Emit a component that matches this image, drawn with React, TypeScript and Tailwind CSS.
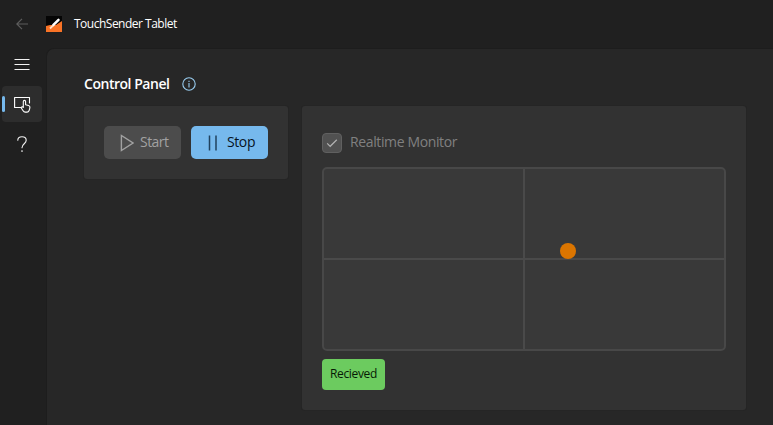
import React from 'react';

function TitleBar() {
  return (
    <header className="flex h-12 shrink-0 items-center pl-4">
      <svg className="h-3 w-3 shrink-0" viewBox="0 0 12 12" fill="none" stroke="#5d5d5d" strokeWidth="1.2">
        <path d="M12 6H.8M6 .8.8 6 6 11.2" />
      </svg>
      <svg className="ml-[18px] h-4 w-4 shrink-0" viewBox="0 0 16 16">
        <path d="M0 0h16v16H0z" fill="#050505" />
        <path d="M0 16v-6l4-1h6l6-4v11z" fill="#f97326" />
        <path d="m7.2 9.2 5.3-5.4" fill="none" stroke="#fff" strokeWidth="2.5" strokeLinecap="round" />
        <path d="m4 12.5 3-3" stroke="#ffe1c8" strokeWidth="1.8" />
      </svg>
      <span className="ml-3 text-[12px] leading-4 tracking-[-0.5px] text-white">TouchSender Tablet</span>
    </header>
  );
}

function NavRail() {
  return (
    <nav className="flex w-[46px] shrink-0 flex-col pl-[2px]">
      <button className="flex h-[38px] w-10 items-center justify-center pb-1">
        <svg className="h-3 w-4" viewBox="0 0 16 12" stroke="#f3f3f3" strokeWidth="1">
          <path d="M.5 .5h15M.5 5.5h15M.5 10.5h15" />
        </svg>
      </button>
      <button className="flex h-9 w-10 items-center rounded bg-[#2d2d2d]">
        <span className="h-4 w-[3px] rounded-full bg-[#76b9ed]" />
        <svg className="ml-[9px] h-[18px] w-[17px]" viewBox="0 0 17 18" fill="none" stroke="#fff" strokeWidth="1.1" strokeLinejoin="round" strokeLinecap="round">
          <path d="M6.6 12.5H.6v-10h14.9V8" />
          <path d="M9.3 12.4V6.5a1.15 1.15 0 0 1 2.3 0v3.3l3 .7c1 .3 1.4.9 1.3 1.8-.1 1.2-.4 2.2-.8 3.2-.4 1-1.1 1.6-2.1 1.6h-1.8c-.9 0-1.6-.5-2.1-1.3l-2-3c.4-1.1 1.5-1.3 2.2-.4" />
        </svg>
      </button>
      <button className="mt-1 flex h-9 w-10 items-center justify-center">
        <svg className="h-4 w-[10px]" viewBox="0 0 10 16" fill="none" stroke="#f3f3f3" strokeWidth="1.1" strokeLinecap="round">
          <path d="M.8 4.3C.8 2.1 2.6.7 5 .7s4.2 1.4 4.2 3.6c0 3.5-4.2 3.5-4.2 7.5" />
          <circle cx="5" cy="15" r=".85" fill="#f3f3f3" stroke="none" />
        </svg>
      </button>
    </nav>
  );
}

function Controls() {
  return (
    <section className="flex h-[73px] w-[204px] shrink-0 gap-[10px] rounded-[3px] bg-[#323232] p-5 shadow-[0_0_0_1px_#252525]">
      <button className="flex h-[33px] w-[77px] items-center rounded-[5px] bg-[#4c4c4c] pl-4 text-[#a1a1a1]">
        <svg className="h-[18px] w-[14px] shrink-0" viewBox="0 0 14 18" fill="none" stroke="currentColor" strokeWidth="1.4">
          <path d="M1.4 1.5v15L13 9z" />
        </svg>
        <span className="ml-[6px] pb-px text-[14px] leading-5 tracking-[-0.55px]">Start</span>
      </button>
      <button className="flex h-[33px] w-[77px] items-center rounded-[5px] bg-[#76b9ed] pl-[17px] text-[#06131f]">
        <svg className="h-4 w-[10px] shrink-0" viewBox="0 0 10 16" stroke="#20425e" strokeWidth="1.5">
          <path d="M1.5.5v15M8 .5v15" />
        </svg>
        <span className="ml-[9px] pb-px text-[14px] leading-5 tracking-[-0.4px]">Stop</span>
      </button>
    </section>
  );
}

function Monitor() {
  return (
    <section className="flex h-[304px] w-[444px] shrink-0 flex-col rounded-[3px] bg-[#323232] px-5 pt-[27px] shadow-[0_0_0_1px_#252525]">
      <div className="flex h-5 items-center">
        <span className="flex h-5 w-5 items-center justify-center rounded border border-[#606060] bg-[#515151]">
          <svg className="h-3 w-3" viewBox="0 0 12 12" fill="none" stroke="#b2b2b2" strokeWidth="1.2">
            <path d="m1.2 6.3 3 3 6.6-6.5" />
          </svg>
        </span>
        <span className="ml-2 pb-[2px] text-[14px] leading-5 tracking-[-0.37px] text-[#808080]">Realtime Monitor</span>
      </div>
      <div className="relative mt-[14px] grid h-[184px] w-[404px] shrink-0 grid-cols-[201px_199px] grid-rows-[91px_89px] rounded-[5px] border-2 border-[#484848] bg-[#393939]">
        <div className="border-r-2 border-b-2 border-[#4a4a4a]" />
        <div className="border-b-2 border-[#4a4a4a]" />
        <div className="border-r-2 border-[#4a4a4a]" />
        <span className="absolute top-[74px] left-[236px] h-4 w-4 rounded-full bg-[#db7500]" />
      </div>
      <div className="mt-2 flex h-[31px] w-[63px] items-center justify-center rounded bg-[#6ccb5f] pb-px text-[12px] tracking-[-0.35px] text-[#071a05]">
        Recieved
      </div>
    </section>
  );
}

export default function App() {
  return (
    <div className="flex h-[425px] w-[773px] flex-col overflow-hidden bg-[#202020] font-['Open_Sans','Noto_Sans',sans-serif]">
      <TitleBar />
      <div className="flex min-h-0 flex-1">
        <NavRail />
        <main className="min-w-0 flex-1 rounded-tl-lg border-t border-l border-[#1d1d1d] bg-[#272727] pt-[25px] pl-[37px]">
          <div className="flex h-5 items-center">
            <h1 className="text-[14px] leading-5 font-semibold tracking-[-0.47px] text-white">Control Panel</h1>
            <svg className="ml-[12.5px] h-[14px] w-[14px]" viewBox="0 0 14 14" fill="none" stroke="#99cdf0" strokeWidth="1.1">
              <circle cx="7" cy="7" r="6.2" />
              <path d="M7 6v4.5M7 3.7v1.2" />
            </svg>
          </div>
          <div className="mt-3 flex items-start gap-[14px]">
            <Controls />
            <Monitor />
          </div>
        </main>
      </div>
    </div>
  );
}
